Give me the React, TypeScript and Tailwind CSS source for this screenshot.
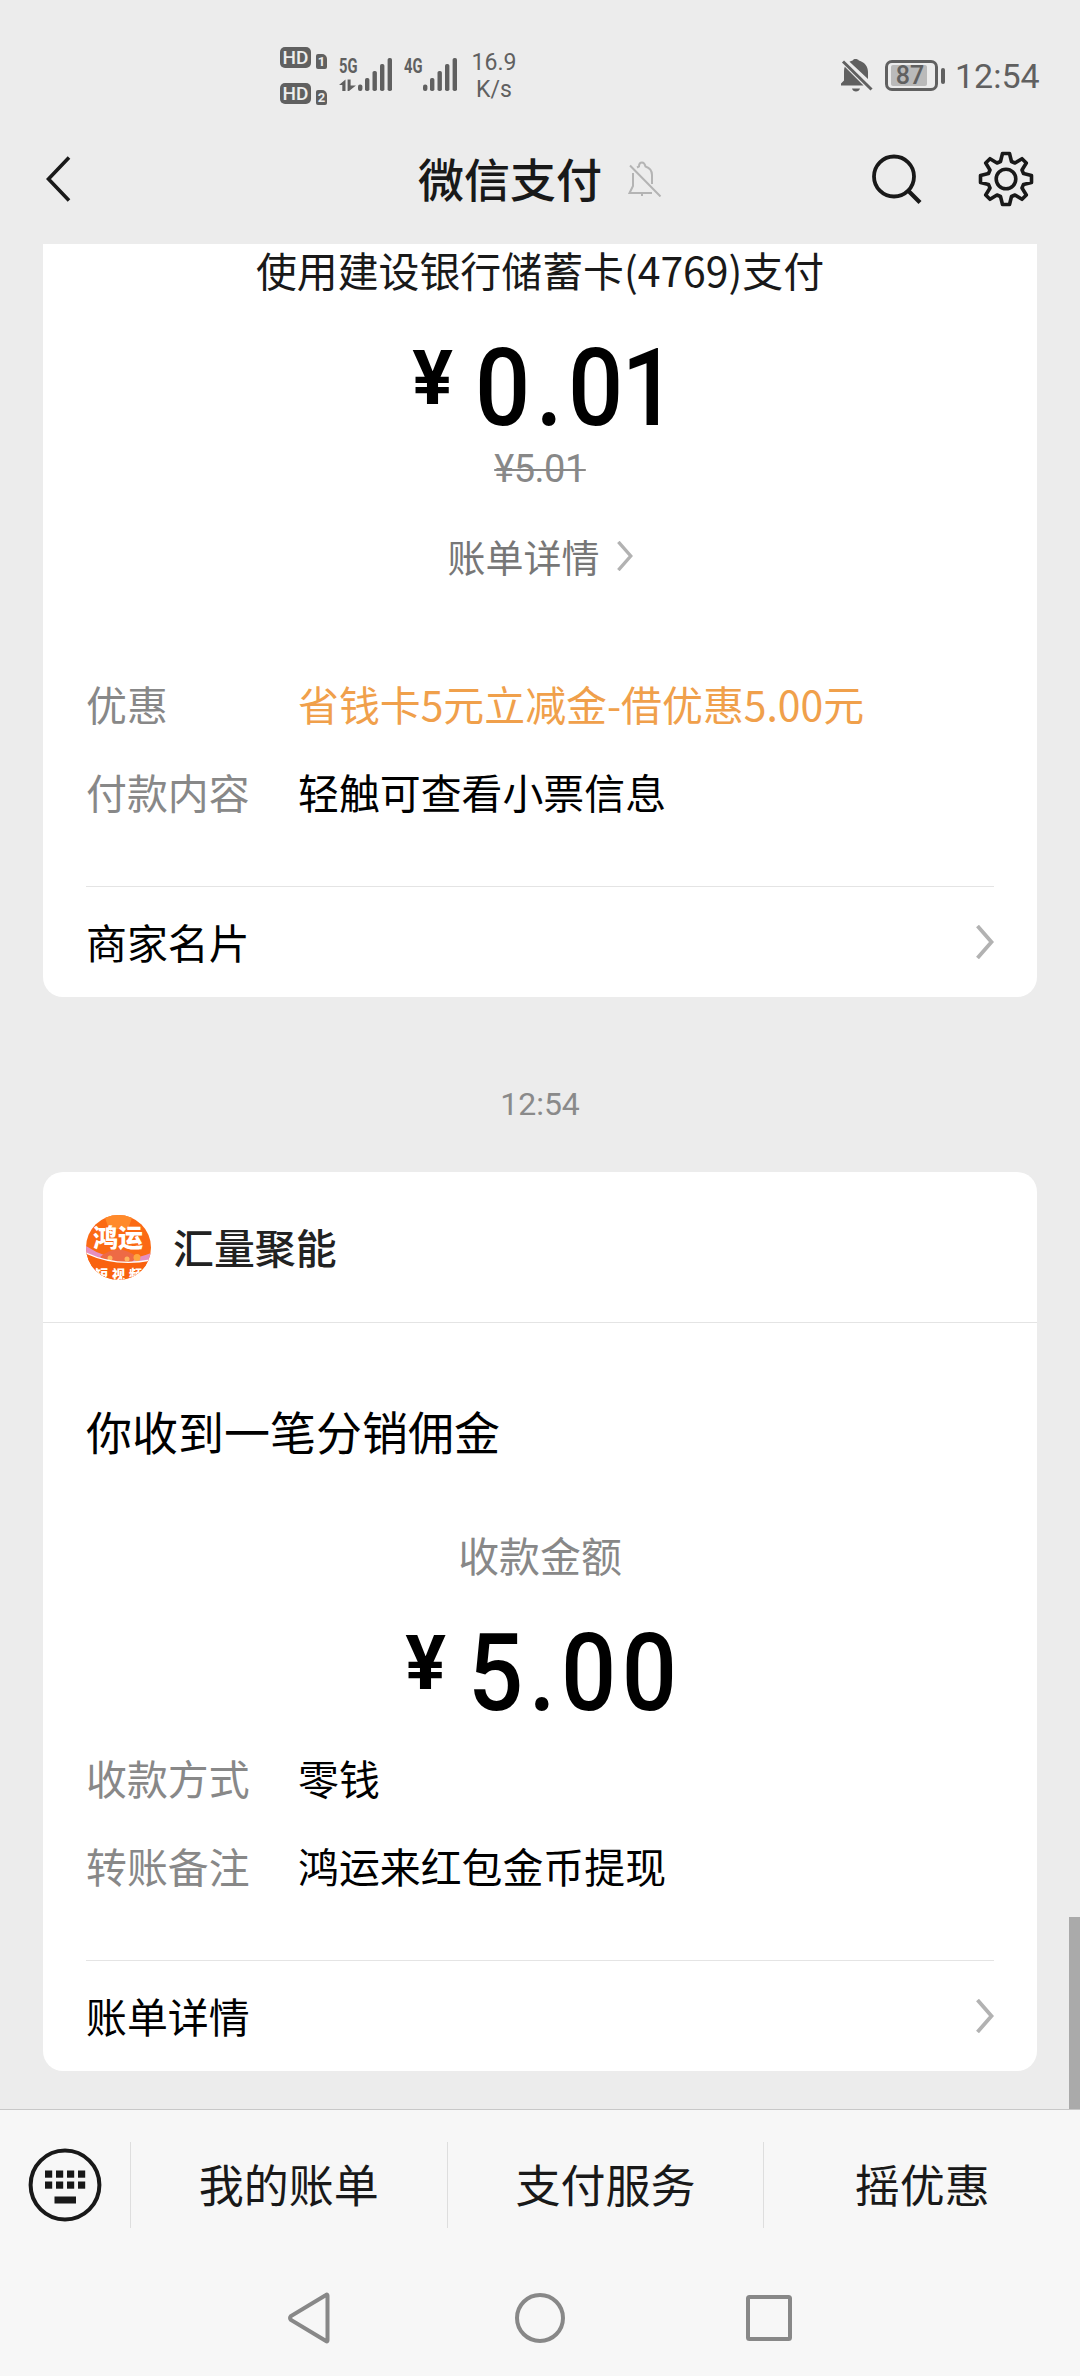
import type { ReactNode } from "react";

type Detail = {
  label: string;
  value: string;
  highlight?: boolean;
};

const discountDetails: Detail[] = [
  { label: "优惠", value: "省钱卡5元立减金-借优惠5.00元", highlight: true },
  { label: "付款内容", value: "轻触可查看小票信息" },
];

const incomeDetails: Detail[] = [
  { label: "收款方式", value: "零钱" },
  { label: "转账备注", value: "鸿运来红包金币提现" },
];

const menus = ["我的账单", "支付服务", "摇优惠"];

function HdBadge({ sim }: { sim: string }) {
  return (
    <div className="flex h-[22px] items-end gap-[5px] font-['Roboto']">
      <span className="w-[31px] self-start rounded-[5px] bg-[#606060] text-center text-[19px] font-medium leading-[21px] text-[#ededed]">
        HD
      </span>
      <span className="w-[11px] rounded-[2px] rounded-tr-[5px] bg-[#606060] text-center text-[13px] font-bold leading-[15px] text-[#ededed]">
        {sim}
      </span>
    </div>
  );
}

function Signal({ label, arrows }: { label: string; arrows?: boolean }) {
  return (
    <svg width="54" height="36" viewBox="0 0 54 36" fill="#606060">
      <text
        x="0"
        y="17"
        fontFamily="Roboto"
        fontWeight="700"
        fontSize="21"
        textLength="18.500"
        lengthAdjust="spacingAndGlyphs"
      >
        {label}
      </text>
      {arrows && (
        <path d="M6.500 23.500V35H3.300V29H0ZM8.600 23.500H11.600V29.500H17L10 35H8.600Z" />
      )}
      <rect x="19" y="28.500" width="4.400" height="6.500" rx="2" />
      <rect x="26" y="22" width="4.400" height="13" rx="1.800" />
      <rect x="33.500" y="15" width="4.400" height="20" rx="1.800" />
      <rect x="41" y="8" width="4.400" height="27" rx="1.800" />
      <rect x="48.600" y="2" width="4.400" height="33" rx="1.800" />
    </svg>
  );
}

function StatusBar() {
  return (
    <div className="flex h-[114px] items-start font-['Roboto'] text-[#606060]">
      <div className="ml-[280px] mt-[47px] flex w-[47px] flex-col gap-[14px]">
        <HdBadge sim="1" />
        <HdBadge sim="2" />
      </div>
      <div className="ml-3 mt-14 flex gap-[11px]">
        <Signal label="5G" arrows />
        <Signal label="4G" />
      </div>
      <div className="ml-[11px] mt-[49px] w-[50px] text-center text-[23px] leading-[27px]">
        16.9
        <br />
        K/s
      </div>
      <svg className="ml-[321px] mt-[57px]" width="34" height="36" viewBox="0 0 34 36">
        <path
          d="M15.500 2C17 2 18.300 2.500 18.800 3.500C24.500 5 28 9.500 28 15V22L9.500 4.800C10.500 4.200 11.700 3.700 12.700 3.500C13.200 2.500 14 2 15.500 2ZM4 14C4 12.500 4.300 11 4.800 9.700L23.500 28.500H1V26.500L4 23.500ZM12 31.500H20C19.500 33.500 18 34.500 16 34.500C14 34.500 12.500 33.500 12 31.500Z"
          fill="#606060"
        />
        <path d="M3 4.500L31.500 32.500" stroke="#606060" strokeWidth="3" />
      </svg>
      <div className="ml-[11px] mt-[60px] flex items-center gap-[3px]">
        <div className="flex h-[31px] w-[53px] items-center rounded-[7px] border-[3px] border-[#606060] pl-[3px]">
          <div className="w-[36px] rounded-[2px] bg-[#bababa] pl-[2px] text-center text-[25px] font-medium leading-[21px]">
            87
          </div>
        </div>
        <div className="h-4 w-1 rounded-[2px] bg-[#606060]" />
      </div>
      <div className="ml-[10px] mt-[56px] text-[34px] leading-10">12:54</div>
    </div>
  );
}

function MutedBell() {
  return (
    <svg
      className="ml-[26px]"
      width="34"
      height="36"
      viewBox="0 0 34 36"
      fill="none"
      stroke="#b4b4b4"
      strokeWidth="2"
    >
      <path d="M5 12V25L1.500 32H24M9 6.500L11 5.500C11 3.500 12 1.500 14 1.500C16 1.500 17 3.500 17.500 5.500C22 7 24 10 24 14V23" />
      <path d="M14 32V35M2 4.500L32.500 35.500" />
    </svg>
  );
}

function GearIcon() {
  return (
    <svg width="58" height="58" viewBox="-29 -29 58 58" fill="none" stroke="#191919">
      <path
        strokeWidth="3.600"
        strokeLinejoin="round"
        d="M-3.500 -25.500H3.500L5.500 -17.500L9 -16L16 -20.300L20.300 -16L16 -9L17.500 -5.500L25.500 -3.500V3.500L17.500 5.500L16 9L20.300 16L16 20.300L9 16L5.500 17.500L3.500 25.500H-3.500L-5.500 17.500L-9 16L-16 20.300L-20.300 16L-16 9L-17.500 5.500L-25.500 3.500V-3.500L-17.500 -5.500L-16 -9L-20.300 -16L-16 -20.300L-9 -16L-5.500 -17.500Z"
      />
      <circle r="9.800" strokeWidth="3.600" />
    </svg>
  );
}

function Header() {
  return (
    <header className="flex h-[130px] items-center pl-[44px] text-[#191919]">
      <svg width="28" height="46" viewBox="0 0 28 46" fill="none" stroke="#191919" strokeWidth="3.600">
        <path d="M25 1.500L4.500 23L25 44.500" />
      </svg>
      <h1 className="ml-[346px] pb-[5px] text-[46px] font-medium leading-[60px]">微信支付</h1>
      <MutedBell />
      <svg className="ml-[207px]" width="54" height="54" viewBox="0 0 54 54" fill="none" stroke="#191919">
        <circle cx="25" cy="24.500" r="20" strokeWidth="3.800" />
        <path d="M39 38.500L51 50.500" strokeWidth="4.200" />
      </svg>
      <div className="ml-[54px]">
        <GearIcon />
      </div>
    </header>
  );
}

function Chevron({ className }: { className?: string }) {
  return (
    <svg
      className={className}
      viewBox="0 0 18 34"
      fill="none"
      stroke="#b2b2b2"
      strokeWidth="3.800"
    >
      <path d="M1.500 1L15.500 17L1.500 33" />
    </svg>
  );
}

function Amount({ children, className }: { children: ReactNode; className: string }) {
  return (
    <div className={`flex h-[108px] items-start justify-center font-['Roboto'] text-black ${className}`}>
      <span className="mt-[6px] text-[76px] font-bold leading-[76px]">¥</span>
      {/* digits are slightly condensed */}
      <span className="ml-[22px] w-[213px] origin-left scale-x-90 whitespace-nowrap text-[108px] font-medium leading-[108px] tracking-[6px]">
        {children}
      </span>
    </div>
  );
}

function DetailList({ items }: { items: Detail[] }) {
  return (
    <dl className="flex flex-col gap-9 px-[43px] leading-[52px]">
      {items.map((item) => (
        <div key={item.label} className="flex">
          <dt className="w-[212px] text-[#888888]">{item.label}</dt>
          <dd className={item.highlight ? "text-[#f0a04b]" : "text-black"}>{item.value}</dd>
        </div>
      ))}
    </dl>
  );
}

function CardLink({ label }: { label: string }) {
  return (
    <div className="mx-[43px] mt-[68px] flex h-[111px] items-center justify-between border-t border-[#e4e4e4]">
      <span>{label}</span>
      <Chevron className="h-[34px] w-[18px]" />
    </div>
  );
}

function MerchantLogo() {
  return (
    <svg width="65" height="65" viewBox="0 0 65 65">
      <defs>
        <clipPath id="logo">
          <circle cx="32.500" cy="32.500" r="32.500" />
        </clipPath>
      </defs>
      <g clipPath="url(#logo)" fontFamily="'Noto Sans CJK SC', sans-serif" fontWeight="900">
        <rect width="65" height="65" fill="#fb6a14" />
        <path d="M18 0H47L42 14H23Z" fill="#ff8a2b" />
        <path d="M0 31Q32 52 65 38V46Q30 54 0 38Z" fill="#e58fc0" />
        <path d="M14 42Q32 27 51 42L46 47Q32 50 18 45Z" fill="#ee6a45" />
        <circle cx="24" cy="43" r="2.500" fill="#ffb45c" />
        <circle cx="41" cy="44" r="2.500" fill="#ffb45c" />
        <circle cx="51" cy="42.500" r="3.500" fill="#ffa63d" />
        <path d="M0 38Q30 52 65 45V65H0Z" fill="#f9620f" />
        <path d="M0 38Q30 52 65 45" fill="none" stroke="#fff" strokeWidth="1.300" />
        <text x="7" y="32" fontSize="25" fill="#fff" textLength="50">
          鸿运
        </text>
        <text x="9" y="64" fontSize="13" fill="#fff" textLength="47">
          短视频
        </text>
      </g>
    </svg>
  );
}

function KeyboardIcon() {
  return (
    <svg width="74" height="74" viewBox="0 0 74 74" fill="#191919">
      <circle cx="37" cy="37" r="34.400" fill="none" stroke="#191919" strokeWidth="4" />
      {[17, 28, 39, 50].map((x) => (
        <g key={x}>
          <rect x={x} y="22.500" width="7.200" height="7.200" />
          <rect x={x} y="33.500" width="7.200" height="7.200" />
        </g>
      ))}
      <rect x="26.500" y="48.500" width="21.500" height="7" />
    </svg>
  );
}

function SystemNav() {
  return (
    <nav className="flex h-[116px] items-center pl-[286px]">
      <svg width="508" height="54" viewBox="0 0 508 54" fill="none" stroke="#888888" strokeWidth="4">
        <path d="M41.500 4.500V49.500Q41.500 51 40 50L5 29Q3 27 5 25L40 4Q41.500 3 41.500 4.500Z" />
        <circle cx="254" cy="27" r="23" />
        <rect x="462" y="6" width="42" height="42" rx="1.500" />
      </svg>
    </nav>
  );
}

export default function App() {
  return (
    <div className="flex h-[2376px] w-[1080px] flex-col overflow-hidden bg-[#ececec] font-['Noto_Sans_CJK_SC',sans-serif] text-[40.9px]">
      <StatusBar />
      <Header />

      <main className="relative h-[1865px] px-[43px]">
        <section className="h-[753px] w-[994px] rounded-b-[20px] bg-white">
          <p className="text-center leading-[52px] text-[#191919]">使用建设银行储蓄卡(4769)支付</p>
          <Amount className="mt-[38px] pl-5">
            0.0<span className="-ml-[8px]">1</span>
          </Amount>
          <p className="mt-[5px] text-center font-['Roboto'] text-[38px] leading-[44px] tracking-[-0.5px] text-[#888888] line-through decoration-2">
            ¥5.01
          </p>
          <div className="mt-[43px] mb-[100px] flex h-11 items-center justify-center text-[38px] leading-[44px] text-[#777777]">
            账单详情
            <Chevron className="ml-[17px] h-[30px] w-[16px]" />
          </div>
          <DetailList items={discountDetails} />
          <CardLink label="商家名片" />
        </section>

        <time className="block h-[175px] pt-[87px] text-center font-['Roboto'] text-[32px] leading-10 text-[#8a8a8a]">
          12:54
        </time>

        <section className="h-[899px] w-[994px] rounded-[20px] bg-white">
          <div className="flex h-[151px] items-center gap-[22px] border-b border-[#e4e4e4] pl-[43px] font-medium text-[#222222]">
            <MerchantLogo />
            汇量聚能
          </div>
          <h2 className="mt-[79px] pl-[43px] text-[46px] leading-[56px] text-black">
            你收到一笔分销佣金
          </h2>
          <p className="mt-[71px] text-center leading-[52px] text-[#888888]">收款金额</p>
          <Amount className="mt-[38px] mb-[25px] pl-[6px]">5.00</Amount>
          <DetailList items={incomeDetails} />
          <CardLink label="账单详情" />
        </section>

        {/* scroll thumb */}
        <div className="absolute right-0 bottom-0 h-[192px] w-[11px] bg-[#aaaaaa]" />
      </main>

      <footer className="border-t border-[#c8c8c8] bg-[#f7f7f7]">
        <div className="flex h-[150px] items-center text-[45px] text-[#191919]">
          <div className="flex w-[130px] justify-center">
            <KeyboardIcon />
          </div>
          {menus.map((menu) => (
            <div
              key={menu}
              className="flex h-[86px] flex-1 items-center justify-center border-l border-[#dedede] pb-[2px]"
            >
              {menu}
            </div>
          ))}
        </div>
        <SystemNav />
      </footer>
    </div>
  );
}
